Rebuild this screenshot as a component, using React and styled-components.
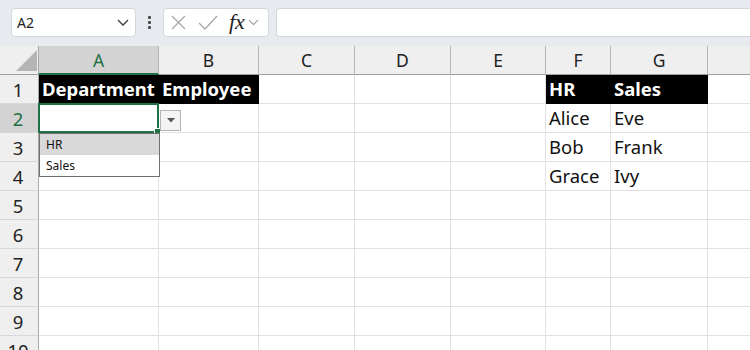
import React from "react";
import styled, { createGlobalStyle } from "styled-components";

const Global = createGlobalStyle`
  html, body { margin: 0; padding: 0; background: #fff; }
  body { font-family: "Noto Sans", "Liberation Sans", sans-serif; overflow: hidden; }
`;

const GREEN = "#1e7145";
const COLS = [
  { key: "A", w: 120 },
  { key: "B", w: 100 },
  { key: "C", w: 96 },
  { key: "D", w: 96 },
  { key: "E", w: 95 },
  { key: "F", w: 65 },
  { key: "G", w: 97 },
  { key: "H", w: 110, hidden: true },
];
const ROW_H = 29;

const Page = styled.div`
  width: 750px;
  height: 350px;
  overflow: hidden;
  display: flex;
  flex-direction: column;
`;

const Toolbar = styled.div`
  height: 46px;
  flex: none;
  background: #e7ebef;
  display: flex;
  align-items: flex-start;
  padding: 8px 0 0 11px;
  box-sizing: border-box;
`;

const Box = styled.div`
  height: 29px;
  box-sizing: border-box;
  background: #fff;
  border: 1px solid #d3d7db;
  border-radius: 4px;
  display: flex;
  align-items: center;
`;

const NameBox = styled(Box)`
  width: 125px;
  padding: 0 6px 0 5px;
  justify-content: space-between;
  font-size: 14px;
  color: #222;
`;

const Dots = styled.div`
  width: 27px;
  height: 29px;
  display: flex;
  flex-direction: column;
  align-items: center;
  justify-content: center;
  gap: 2px;
  span {
    width: 3px;
    height: 3px;
    background: #4a4a4a;
    border-radius: 1px;
  }
`;

const FxBox = styled(Box)`
  width: 106px;
  padding: 0 3px 0 6px;
`;

const Fx = styled.span`
  font-family: "Liberation Serif", "DejaVu Serif", serif;
  font-style: italic;
  font-size: 22px;
  color: #222;
  margin: -2px 3px 0 10px;
  line-height: 1;
`;

const FormulaInput = styled(Box)`
  flex: 1;
  margin-left: 7px;
  border-right: none;
  border-radius: 4px 0 0 4px;
`;

const Sheet = styled.div`
  display: grid;
  grid-template-columns: 39px ${COLS.map((c) => c.w + "px").join(" ")};
  grid-auto-rows: ${ROW_H}px;
  font-size: 18.5px;
  color: #111;
`;

const Corner = styled.div`
  background: #efefef;
  border-right: 1px solid #a9a9a9;
  border-bottom: 1px solid #9f9f9f;
  box-sizing: border-box;
  position: relative;
  svg { position: absolute; left: 16px; top: 4px; }
`;

const ColHead = styled.div`
  box-sizing: border-box;
  background: ${(p) => (p.$sel ? "#d3d3d3" : "#efefef")};
  border-right: 1px solid #b5b5b5;
  border-bottom: ${(p) => (p.$sel ? `2px solid ${GREEN}` : "1px solid #9f9f9f")};
  color: ${(p) => (p.$sel ? GREEN : "#222")};
  font-size: 17.5px;
  display: flex;
  align-items: center;
  justify-content: center;
  padding-top: ${(p) => (p.$sel ? "1px" : "0")};
`;

const RowHead = styled.div`
  box-sizing: border-box;
  background: ${(p) => (p.$sel ? "#d3d3d3" : "#efefef")};
  border-right: 1px solid #a9a9a9;
  border-bottom: 1px solid #d8d8d8;
  color: ${(p) => (p.$sel ? GREEN : "#222")};
  font-size: 18.5px;
  display: flex;
  align-items: center;
  justify-content: center;
  padding-right: 2px;
`;

const Cell = styled.div`
  box-sizing: border-box;
  position: relative;
  background: ${(p) => (p.$dark ? "#000" : "#fff")};
  color: ${(p) => (p.$dark ? "#fff" : "#111")};
  font-weight: ${(p) => (p.$dark ? 700 : 400)};
  border-right: 1px solid ${(p) => (p.$dark ? "#000" : "#e1e1e1")};
  border-bottom: 1px solid ${(p) => (p.$dark ? "#000" : "#e1e1e1")};
  display: flex;
  align-items: center;
  padding: 0 0 1px 3px;
  white-space: nowrap;
`;

const Selection = styled.div`
  position: absolute;
  left: -1px;
  top: -1px;
  width: 121px;
  height: 30px;
  box-sizing: border-box;
  border: 2px solid ${GREEN};
  z-index: 2;
  &::after {
    content: "";
    position: absolute;
    right: -4px;
    bottom: -4px;
    width: 5px;
    height: 5px;
    background: ${GREEN};
    border: 1px solid #fff;
  }
`;

const DropButton = styled.div`
  position: absolute;
  left: 121px;
  top: 6px;
  width: 21px;
  height: 21px;
  box-sizing: border-box;
  border: 1px solid #b4b4b4;
  background: #f4f4f4;
  display: flex;
  align-items: center;
  justify-content: center;
  z-index: 3;
`;

const DropList = styled.div`
  position: absolute;
  left: 0;
  top: 29px;
  width: 121px;
  box-sizing: border-box;
  border: 1px solid #707070;
  background: #fff;
  z-index: 4;
  font-weight: 400;
  font-size: 12px;
  color: #111;
`;

const DropItem = styled.div`
  height: 21px;
  display: flex;
  align-items: center;
  padding-left: 6px;
  background: ${(p) => (p.$hi ? "#d9d9d9" : "#fff")};
`;

const content = {
  1: { A: "Department", B: "Employee", F: "HR", G: "Sales" },
  2: { F: "Alice", G: "Eve" },
  3: { F: "Bob", G: "Frank" },
  4: { F: "Grace", G: "Ivy" },
};
const dark = { 1: ["A", "B", "F", "G"] };

function Chevron({ w = 12, color = "#333", sw = 1.4 }) {
  return (
    <svg width={w} height={w * 0.6} viewBox="0 0 12 7">
      <polyline points="1,1 6,6 11,1" fill="none" stroke={color} strokeWidth={sw} />
    </svg>
  );
}

export default function App() {
  const rows = [];
  for (let r = 1; r <= 10; r++) {
    rows.push(
      <RowHead key={"rh" + r} $sel={r === 2}>
        {r}
      </RowHead>
    );
    COLS.forEach((c) => {
      const isDark = (dark[r] || []).includes(c.key);
      const txt = (content[r] || {})[c.key];
      rows.push(
        <Cell key={r + c.key} $dark={isDark}>
          {txt}
          {r === 2 && c.key === "A" && (
            <>
              <Selection />
              <DropButton>
                <svg width="8" height="5" viewBox="0 0 8 5">
                  <polygon points="0,0 8,0 4,4.5" fill="#555" />
                </svg>
              </DropButton>
              <DropList>
                <DropItem $hi>HR</DropItem>
                <DropItem>Sales</DropItem>
              </DropList>
            </>
          )}
        </Cell>
      );
    });
  }

  return (
    <Page>
      <Global />
      <Toolbar>
        <NameBox>
          <span>A2</span>
          <Chevron w={12} color="#444" />
        </NameBox>
        <Dots>
          <span />
          <span />
          <span />
        </Dots>
        <FxBox>
          <svg width="17" height="17" viewBox="0 0 17 17">
            <path d="M2 2 L15 15 M15 2 L2 15" stroke="#a8a8a8" strokeWidth="1.3" fill="none" />
          </svg>
          <svg width="22" height="17" viewBox="0 0 22 17" style={{ marginLeft: 10 }}>
            <polyline points="2,9 8,15 20,2" stroke="#a8a8a8" strokeWidth="1.3" fill="none" />
          </svg>
          <Fx>fx</Fx>
          <Chevron w={11} color="#888" sw={1.1} />
        </FxBox>
        <FormulaInput />
      </Toolbar>
      <Sheet>
        <Corner>
          <svg width="21" height="21" viewBox="0 0 21 21">
            <polygon points="21,0 21,21 0,21" fill="#b5b5b5" />
          </svg>
        </Corner>
        {COLS.map((c) => (
          <ColHead key={c.key} $sel={c.key === "A"}>
            {c.hidden ? null : c.key}
          </ColHead>
        ))}
        {rows}
      </Sheet>
    </Page>
  );
}
